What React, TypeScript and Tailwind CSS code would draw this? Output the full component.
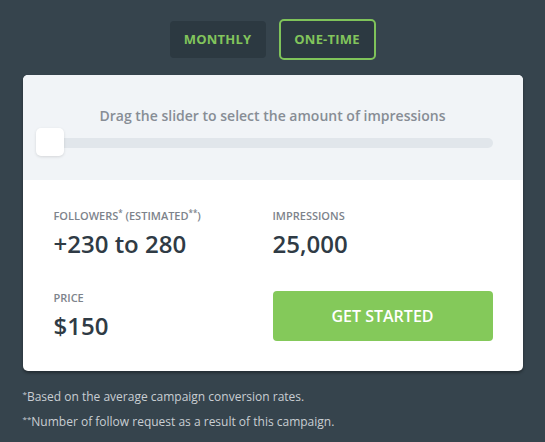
export default function App() {
  return (
    <div
      className="w-[545px] h-[442px] bg-[#36444d] flex flex-col items-center pt-[19px]"
      style={{ fontFamily: '"Open Sans", sans-serif' }}
    >
      <div className="flex items-center gap-[13px]">
        <button className="w-[96px] h-[37px] rounded-[4px] bg-[#2c3941] text-[13px] font-bold text-[#82c55c] tracking-[0.2px]">
          MONTHLY
        </button>
        <button className="w-[97px] h-[41px] rounded-[5px] border-2 border-[#7fc35a] bg-[#2c3941] text-[13px] font-bold text-[#82c55c] tracking-[0.2px]">
          ONE-TIME
        </button>
      </div>

      <div className="mt-[15px] w-[500px] rounded-[5px] bg-white overflow-hidden shadow-[0_2px_3px_rgba(0,0,0,0.35)]">
        <div className="h-[105px] bg-[#f1f4f7] flex flex-col pt-[30px]">
          <p className="text-center text-[14px] font-semibold text-[#878d95]">
            Drag the slider to select the amount of impressions
          </p>
          <div className="relative mt-[12px] w-[453px] h-[10px] ml-[17px] rounded-full bg-[#e1e6eb]">
            <div className="absolute left-[-4px] top-[-10px] w-[28px] h-[28px] rounded-[5px] bg-white shadow-[0_1px_3px_rgba(0,0,0,0.12)]" />
          </div>
        </div>

        <div className="grid grid-cols-[219px_220px] pl-[31px] pt-[29px] pb-[30px] gap-y-[32px]">
          <div>
            <div className="text-[11px] font-semibold text-[#7d838b] leading-[14px]">
              FOLLOWERS<sup className="text-[8px]">*</sup> (ESTIMATED<sup className="text-[8px]">**</sup>)
            </div>
            <div className="mt-[6px] text-[24px] font-semibold text-[#2f3b45] leading-[30px]">+230 to 280</div>
          </div>
          <div>
            <div className="text-[11px] font-semibold text-[#7d838b] leading-[14px]">IMPRESSIONS</div>
            <div className="mt-[6px] text-[24px] font-semibold text-[#2f3b45] leading-[30px]">25,000</div>
          </div>
          <div>
            <div className="text-[11px] font-semibold text-[#7d838b] leading-[14px]">PRICE</div>
            <div className="mt-[6px] text-[24px] font-semibold text-[#2f3b45] leading-[30px]">$150</div>
          </div>
          <button className="h-[50px] rounded-[4px] bg-[#84c95a] text-white text-[16px] font-semibold">
            GET STARTED
          </button>
        </div>
      </div>

      <div className="w-[500px] mt-[18px] text-[12px] text-[#c9ced3] leading-[16px]">
        <p><sup className="text-[8px]">*</sup>Based on the average campaign conversion rates.</p>
        <p className="mt-[9px]"><sup className="text-[8px]">**</sup>Number of follow request as a result of this campaign.</p>
      </div>
    </div>
  )
}
